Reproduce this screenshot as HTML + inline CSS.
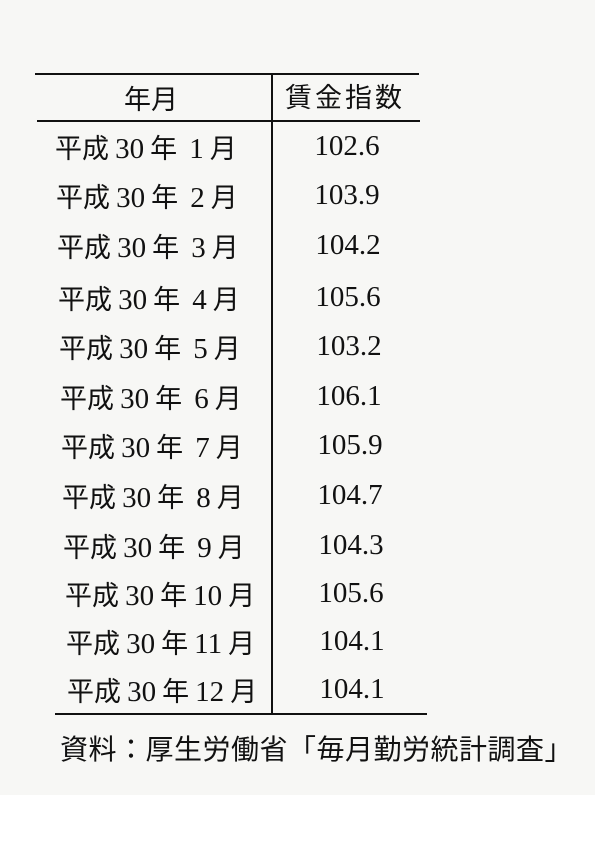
<!DOCTYPE html>
<html><head><meta charset="utf-8"><style>
body{margin:0;width:595px;height:842px;background:#fff;position:relative;overflow:hidden;font-family:"Liberation Sans","Noto Sans CJK JP",sans-serif;color:#111}
.pg{position:absolute;left:0;top:0;width:595px;height:795px;background:#f7f7f5}
.l{position:absolute;background:#111}
.t{position:absolute;font-size:27px;line-height:32px;white-space:nowrap;font-family:"Noto Sans CJK JP",sans-serif}
.t b{font-weight:normal;font-family:"Liberation Serif",serif;font-size:29px}
.n{position:absolute;font-size:29px;line-height:32px;width:140px;text-align:center;font-family:"Liberation Serif",serif}
</style></head><body>
<div class="pg"></div>
<div class="l" style="left:35px;top:73px;width:384px;height:2px"></div>
<div class="l" style="left:37px;top:120px;width:383px;height:2px"></div>
<div class="l" style="left:271px;top:75px;width:2px;height:640px"></div>
<div class="l" style="left:55px;top:713px;width:372px;height:2px"></div>
<div class="t" style="left:124px;top:82px">年月</div>
<div class="t" style="left:285px;top:80px;letter-spacing:3px">賃金指数</div>
<div class="t" style="left:55px;top:131px">平成 <b>30</b> 年&nbsp; <b>1</b> 月</div><div class="n" style="left:277px;top:130px">102.6</div>
<div class="t" style="left:56px;top:180px">平成 <b>30</b> 年&nbsp; <b>2</b> 月</div><div class="n" style="left:277px;top:179px">103.9</div>
<div class="t" style="left:57px;top:230px">平成 <b>30</b> 年&nbsp; <b>3</b> 月</div><div class="n" style="left:278px;top:229px">104.2</div>
<div class="t" style="left:58px;top:282px">平成 <b>30</b> 年&nbsp; <b>4</b> 月</div><div class="n" style="left:278px;top:281px">105.6</div>
<div class="t" style="left:59px;top:331px">平成 <b>30</b> 年&nbsp; <b>5</b> 月</div><div class="n" style="left:279px;top:330px">103.2</div>
<div class="t" style="left:60px;top:381px">平成 <b>30</b> 年&nbsp; <b>6</b> 月</div><div class="n" style="left:279px;top:380px">106.1</div>
<div class="t" style="left:61px;top:430px">平成 <b>30</b> 年&nbsp; <b>7</b> 月</div><div class="n" style="left:280px;top:429px">105.9</div>
<div class="t" style="left:62px;top:480px">平成 <b>30</b> 年&nbsp; <b>8</b> 月</div><div class="n" style="left:280px;top:479px">104.7</div>
<div class="t" style="left:63px;top:530px">平成 <b>30</b> 年&nbsp; <b>9</b> 月</div><div class="n" style="left:281px;top:529px">104.3</div>
<div class="t" style="left:65px;top:578px">平成 <b>30</b> 年 <b>10</b> 月</div><div class="n" style="left:281px;top:577px">105.6</div>
<div class="t" style="left:66px;top:626px">平成 <b>30</b> 年 <b>11</b> 月</div><div class="n" style="left:282px;top:625px">104.1</div>
<div class="t" style="left:67px;top:674px">平成 <b>30</b> 年 <b>12</b> 月</div><div class="n" style="left:282px;top:673px">104.1</div>
<div class="t" style="left:60px;top:732px;font-size:28px;letter-spacing:0.5px">資料：厚生労働省「毎月勤労統計調査」</div>
</body></html>
